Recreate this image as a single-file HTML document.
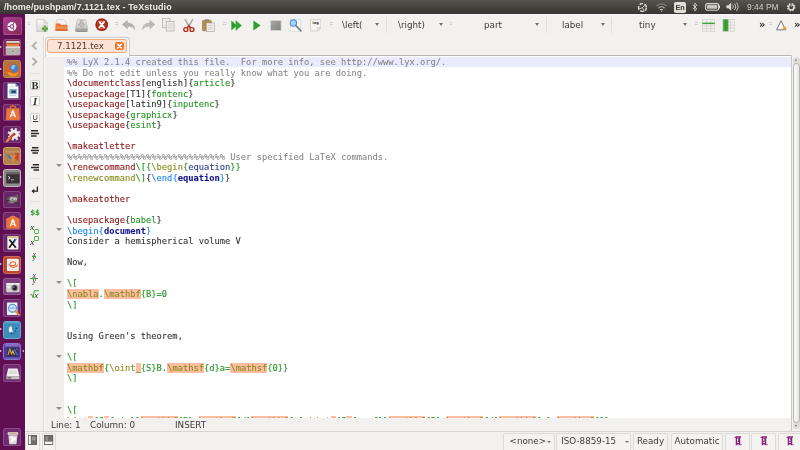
<!DOCTYPE html>
<html><head><meta charset="utf-8"><title>TeXstudio</title>
<style>
*{margin:0;padding:0;box-sizing:border-box}
html,body{width:800px;height:450px;overflow:hidden;background:#f2f1f0;font-family:"DejaVu Sans","Liberation Sans",sans-serif}
.abs{position:absolute}
#panel{left:0;top:0;width:800px;height:13.700px;background:linear-gradient(#56544d,#44433e 55%,#3b3a36 90%,#33322f)}
#title{will-change:transform;left:4px;top:0;height:14px;line-height:14px;font-size:9px;font-weight:bold;color:#efebe3;font-family:"Liberation Sans","DejaVu Sans",sans-serif;white-space:nowrap;letter-spacing:0.08px}
#launcher{left:0;top:14px;width:25px;height:436px;background:#610f53}
#toolbar{left:25px;top:13.700px;width:775px;height:42px;background:linear-gradient(#fbfbfa 0,#f4f3f2 1.200px,#f2f1f0 2px)}
#editor{left:45px;top:55.400px;width:746px;height:363px;background:#fff;border-top:1px solid #b9b7b4;overflow:hidden}
#gutter{left:0;top:0;width:19px;height:363px;background:#f0efee}
#curline{left:19px;top:.5px;width:727px;height:9.900px;background:#ebebfe}
#code{-webkit-text-stroke:.1px;will-change:transform;left:21.800px;top:0.250px;font-family:"DejaVu Sans Mono","Liberation Mono",monospace;font-size:8.76px;line-height:10.558px;white-space:pre;color:#333;letter-spacing:0px}
#code div{height:10.558px}
.cm{color:#828282;-webkit-text-stroke:.04px}.kw{color:#8a1414}.gr{color:#209320}.ol{color:#8a8a1c}.bl{color:#1482f0}.nv{color:#14148a;font-weight:bold}.nv2{color:#2a3a8a}
.hl{background:#fdbda1}
.bk{color:#3a3a3a}

.ui{will-change:transform;font-family:"DejaVu Sans","Liberation Sans",sans-serif;font-size:8.75px;color:#3c3c3c;white-space:nowrap}
#tabframe{left:44.5px;top:36.5px;width:85px;height:20px;border:1px solid #cfcdc9;border-bottom:none;border-radius:3px 3px 0 0;background:#f8f7f6}
#tab{left:46.7px;top:39.2px;width:80.5px;height:14px;border:1px solid #f1a77c;border-radius:2.5px;background:#fbe2d5}
#tabtxt{left:57.2px;top:39.2px;height:14px;line-height:14px;font-size:8.7px;color:#4a3a30}
#tabx{left:115px;top:42.2px;width:9px;height:8.2px;border-radius:2px;background:#e9772f}
#sidepanel{left:25px;top:36px;width:20px;height:396px;background:linear-gradient(90deg,#fbfaf9 0,#fbfaf9 1.400px,#f2f1f0 1.400px,#f2f1f0 18.300px,#dddbd8 18.300px,#dddbd8 19.100px,#fafaf9 19.100px)}
#statusline{left:45px;top:418.900px;width:746px;height:12px;background:#f2f1f0}
#bottombar{left:25px;top:431px;width:775px;height:19px;background:#f2f1f0;border-top:1px solid #d8d6d3}
.sbox{top:433px;height:17px;border:1px solid #dddbd8;border-bottom:none;border-radius:2px 2px 0 0;background:#f4f3f2;line-height:15px;text-align:center}
#vscroll{left:791px;top:55px;width:9px;height:376px;background:#f2f1f0;border-left:1px solid #c9c7c4}
#vtrack{left:793px;top:57px;width:7px;height:372px;background:#dedcd9;border-radius:3.5px}
#vthumb{left:793px;top:63px;width:7px;height:360px;background:linear-gradient(90deg,#fdfdfd,#e6e5e3);border:1px solid #b4b2ae;border-radius:3.5px}

.tile{position:absolute;left:3.200px;width:18px;height:17.700px;border-radius:2.6px;border:0.7px solid rgba(255,255,255,.16);background:rgba(255,255,255,.13);overflow:hidden}
.tile svg{position:absolute;left:-0.7px;top:-0.7px;width:17.8px;height:17.8px}
.pip{position:absolute;left:0;width:0;height:0;border-left:2.2px solid #e8e0e6;border-top:1.6px solid transparent;border-bottom:1.6px solid transparent}

.ic{position:absolute}
.grip{position:absolute;width:2.600px;height:6px;top:22.400px;background:repeating-linear-gradient(#d3d1cd 0,#d3d1cd .9px,transparent .9px,transparent 2.300px)}
.cb{position:absolute;top:14px;height:22px;line-height:22px}
.arr{position:absolute;top:23.200px;width:0;height:0;border-top:3.300px solid #707070;border-left:2.900px solid transparent;border-right:2.900px solid transparent;margin-left:.5px}
.vsep{position:absolute;top:17px;height:16px;width:1px;background:#e2e0dd}
#root{position:absolute;left:0;top:0;width:800px;height:450px;overflow:hidden;opacity:.999}
</style></head><body><div id="root">
<div id="panel" class="abs"></div>
<div id="title" class="abs">/home/pushpam/7.1121.tex - TeXstudio</div>
<div id="launcher" class="abs">
<div class="tile" style="top:2.90px;left:3px;width:18.600px;background:linear-gradient(135deg,#ab3e9b,#96326f 55%,#862a5a);border-color:rgba(255,255,255,.1)"><svg viewBox="0 0 18 18" style="left:-.3px"><circle cx="8" cy="9.600" r="4.600" fill="#fbf7fa"/><circle cx="8" cy="9.600" r="2.300" fill="#8e2f7a"/><path d="M8 9.600H3.200M8 9.600l2.400-4.200M8 9.600l2.400 4.200" stroke="#8e2f7a" stroke-width=".9"/><circle cx="8" cy="9.600" r="1.250" fill="#fbf7fa"/></svg></div>
<div class="tile" style="top:24.62px;background:#7e2a5e"><svg viewBox="0 0 18 18"><rect x="2.200" y="2" width="13.600" height="3" rx=".8" fill="#d6d2cf"/><rect x="2.600" y="4" width="12.800" height="4.200" fill="#e8813f"/><rect x="2.600" y="4" width="12.800" height="1.200" fill="#b9592a"/><rect x="1.800" y="7.600" width="14.400" height="8.600" rx=".9" fill="#b3b0ad"/><rect x="1.800" y="7.600" width="14.400" height="1.500" fill="#e2dfdc"/><circle cx="9" cy="12.200" r="1.700" fill="#9a9794" stroke="#d2cfcc" stroke-width=".6"/></svg></div>
<div class="tile" style="top:46.34px;background:#b3723f;border-color:#c08d58"><svg viewBox="0 0 18 18"><circle cx="9.200" cy="9.200" r="6.400" fill="#e2601c"/><path d="M3.200 11c1 3.200 4 5 7 4.400 2.600-.5 4.600-2.400 5.200-4.800-1.800 1.800-4.600 2.600-7 1.800-2.200-.7-3.800-2.200-5.200-1.400z" fill="#f09a2a"/><circle cx="10" cy="7.600" r="4.200" fill="#3f7fd0"/><path d="M8 4.600c1.400-.9 3.200-.6 4.200.6-1.100-.1-1.900.3-2.200 1 .7.400.9 1.100.6 1.900-1-.5-2-.3-2.600.4-.9-1.500-.9-3 0-3.900z" fill="#8fd0f0"/><path d="M5.600 4.200c-1 1.600-1 3.600 0 5.200 1 1.800 3.200 2.800 5.400 2.400-1.800-.5-3-1.700-3.300-3.300-1 .1-1.900-.5-2.300-1.400.4-.6.300-1.400-.2-1.900.1-.4.200-.7.400-1z" fill="#e2601c"/></svg></div>
<div class="tile" style="top:68.06px;background:#5e2a6e"><svg viewBox="0 0 18 18"><path d="M3.600 1.600h8l3 3v11.800H3.600z" fill="#fbfbfb"/><path d="M11.600 1.600l3 3h-3z" fill="#3f8fcf"/><rect x="5.400" y="7" width="7.600" height="5.400" fill="#7ab2de"/><rect x="7.400" y="8.600" width="4.600" height="2.400" fill="#2d3f50"/><rect x="5.400" y="13.400" width="7" height=".9" fill="#b9c9d9"/><rect x="5.400" y="4.400" width="4" height=".9" fill="#c9d5e0"/></svg></div>
<div class="tile" style="top:89.78px;background:#71266a"><svg viewBox="0 0 18 18"><path d="M2.600 4.400h12.800l.8 11.800H1.800z" fill="#e9743a"/><path d="M6.200 4.600c0-3.600 5.600-3.600 5.600 0" fill="none" stroke="#e9743a" stroke-width="1.300"/><path d="M6.400 13.400l2.600-6.600 2.600 6.600" fill="none" stroke="#fff" stroke-width="1.300"/><circle cx="9" cy="11.400" r=".8" fill="#fff"/><circle cx="7.200" cy="8" r=".5" fill="#fff"/><circle cx="10.800" cy="8" r=".5" fill="#fff"/></svg></div>
<div class="tile" style="top:111.50px;background:#6a2268"><svg viewBox="0 0 18 18"><circle cx="10.200" cy="8.400" r="5.200" fill="none" stroke="#dedcda" stroke-width="2.600" stroke-dasharray="2.300 1.780"/><circle cx="10.200" cy="8.400" r="4.600" fill="#efeeed"/><circle cx="10.200" cy="8.400" r="1.500" fill="#8a5a86"/><path d="M3 15.200l7-7" stroke="#c8452c" stroke-width="2.300" stroke-linecap="round"/><path d="M3 15.200l2.600-2.600" stroke="#e8853a" stroke-width="2.300" stroke-linecap="round"/></svg></div>
<div class="tile" style="top:133.22px;background:#b5814f;border-color:#c9a070"><svg viewBox="0 0 18 18"><path d="M3.600 7l2.600 3.600 1.400-1z" fill="#2f7fd0" stroke="#2f7fd0" stroke-width="1.300" stroke-linejoin="round"/><path d="M7 7.600l2 2.400 2-2.400M9 10v3.600" fill="none" stroke="#f08a28" stroke-width="1.500"/><path d="M11 6h4.400M14 6v6.600M14 9c-2.400-1-2.800 1.800-.8 2" fill="none" stroke="#d42a2a" stroke-width="1.200"/><rect x="2" y="3" width="14" height="1.600" fill="#c79a60" opacity=".8"/></svg></div>
<div class="tile" style="top:154.94px;background:#8e8b8c;border-color:#bdbbbb"><svg viewBox="0 0 18 18"><rect x="2.200" y="3.600" width="13.600" height="11" rx="1" fill="#3b3336"/><rect x="2.200" y="3.600" width="13.600" height="1.800" rx=".8" fill="#6b6667"/><path d="M4.200 7.400l2 1.400-2 1.400" fill="none" stroke="#f0f0f0" stroke-width=".9"/><rect x="7" y="10.600" width="3" height=".8" fill="#d0d0d0"/></svg></div>
<div class="tile" style="top:176.66px;background:#6a2468"><svg viewBox="0 0 18 18"><ellipse cx="8.400" cy="9" rx="5.400" ry="3.600" fill="#7d7a72"/><path d="M2 7.600l3-2 2 2.400z" fill="#5a574f"/><path d="M10 6l4-3 .6 5z" fill="#6a675f"/><ellipse cx="8" cy="8.200" rx="1.800" ry="1.500" fill="#e9e7e2"/><ellipse cx="11.400" cy="8" rx="1.500" ry="1.300" fill="#e9e7e2"/><circle cx="8.300" cy="8.300" r=".7" fill="#222"/><circle cx="11.500" cy="8.100" r=".6" fill="#222"/><path d="M11 11.600l4.600 2.400" stroke="#3a3a3a" stroke-width="1.300" stroke-linecap="round"/><ellipse cx="4" cy="9.600" rx="1.500" ry="1" fill="#2c2c2c"/></svg></div>
<div class="tile" style="top:198.38px;background:#71266a"><svg viewBox="0 0 18 18"><path d="M2.200 5.800L9 2.600l6.800 3.200v10.200H2.200z" fill="#e9743a"/><path d="M6.400 3.800h5.200" stroke="#f0b090" stroke-width=".6" stroke-dasharray=".6 .6"/><path d="M6.400 13.400l2.600-6.600 2.600 6.600" fill="none" stroke="#fff" stroke-width="1.300"/><circle cx="9" cy="11.400" r=".8" fill="#fff"/><circle cx="7.200" cy="8" r=".5" fill="#fff"/><circle cx="10.800" cy="8" r=".5" fill="#fff"/></svg></div>
<div class="tile" style="top:220.10px;background:#6a2468"><svg viewBox="0 0 18 18"><rect x="3.400" y="2.400" width="11.200" height="13.200" rx=".8" fill="#f3f2ef"/><rect x="3.400" y="2.400" width="11.200" height="1.600" fill="#d9c27a"/><path d="M5.400 5.600l6.600 8.400M11.600 5.400L5.200 14" stroke="#1a1a1a" stroke-width="1.700"/><path d="M12.600 4.800L10 9" stroke="#2f7fd0" stroke-width="1.100"/></svg></div>
<div class="tile" style="top:241.82px;background:#bb452e;border-color:#d0705a"><svg viewBox="0 0 18 18"><rect x="3" y="2.800" width="12" height="12.400" rx="1" fill="#f5f3f1"/><path d="M5.400 9.400c1-4.400 6.400-4.600 6.400-1.600 0 2-3.600 2.600-6 1.600 1.600 3 5.600 3 8.200-.4" fill="none" stroke="#e8632c" stroke-width="1.100"/><rect x="5" y="13" width="8" height=".8" fill="#d9d6d3"/></svg></div>
<div class="tile" style="top:263.54px;background:#7b3f80"><svg viewBox="0 0 18 18"><rect x="2.200" y="5" width="13.600" height="9.400" rx="1.200" fill="#d2d0cd"/><rect x="2.200" y="5" width="13.600" height="2" rx="1" fill="#ecebe9"/><circle cx="10.800" cy="10" r="3.400" fill="#8a8887"/><circle cx="10.800" cy="10" r="2.300" fill="#1d1d28"/><circle cx="10" cy="9.300" r=".7" fill="#8aa0d0"/><rect x="3.400" y="8.400" width="2.600" height="1.600" fill="#f6f5f4"/></svg></div>
<div class="tile" style="top:285.26px;background:#6f2a72"><svg viewBox="0 0 18 18"><rect x="3" y="2.600" width="10.600" height="12.600" rx=".6" fill="#eef2f6"/><circle cx="8.600" cy="8.400" r="4" fill="#cfe4f6" stroke="#5b9bd8" stroke-width="1.300"/><path d="M6.400 8.200h4.400" stroke="#5b9bd8" stroke-width="1"/><path d="M11.600 11.400l3.600 3.600" stroke="#e8923a" stroke-width="1.900" stroke-linecap="round"/></svg></div>
<div class="tile" style="top:306.98px;background:#3f8dbb;border-color:#6aa9cc"><svg viewBox="0 0 18 18"><rect x="0" y="0" width="18" height="2.400" fill="#5aa2c9"/><path d="M6.400 5.400c1.400-.4 2 1 1.600 2.400l1 3.200-3.600.4c-.8-2-1-4.600 1-6z" fill="#e9edf1"/><circle cx="12.400" cy="7.400" r=".7" fill="#1d2a6a"/><circle cx="11.600" cy="10.200" r=".7" fill="#1d2a6a"/><circle cx="7.400" cy="13" r=".7" fill="#1d2a6a"/><circle cx="10" cy="13" r=".7" fill="#1d2a6a"/></svg></div>
<div class="tile" style="top:328.70px;background:#4b3aa6;border-color:#8a78d0"><svg viewBox="0 0 18 18"><rect x="1" y="1" width="16" height="2.600" fill="#8a6ac8"/><rect x="3" y="4.400" width="12" height="9.600" fill="#3a3054"/><path d="M4 12l2-6 1.600 5 1.400-3 1.600 4" fill="none" stroke="#f0b030" stroke-width="1.100"/><path d="M10.400 6.400l3.200 6" stroke="#3f6fe0" stroke-width="1.400"/><path d="M5 6.400l2 1.600" stroke="#3fbf6f" stroke-width="1"/><path d="M12.600 5.400l1.400 2" stroke="#e04a8a" stroke-width="1"/><rect x="1" y="14.400" width="16" height="2" fill="#6a58c0"/></svg></div>
<div class="tile" style="top:350.42px;background:#6f2a72"><svg viewBox="0 0 18 18"><path d="M4.200 3.600h9.600l1.800 8H2.400z" fill="#f0efed"/><path d="M5.400 5.600h7.200l.8 3.600H4.600z" fill="#dcdad7"/><rect x="2.400" y="11.600" width="13.200" height="2.800" rx=".6" fill="#c6c4c0"/><rect x="3.400" y="12.600" width="4" height=".9" fill="#2a2a2a"/></svg></div>
<div class="tile" style="top:414.40px;background:#6f2a72"><svg viewBox="0 0 18 18"><rect x="3.600" y="3.400" width="10.800" height="2.400" rx=".8" fill="#eceae8"/><rect x="5" y="4" width="8" height=".9" fill="#e07a3c" opacity=".7"/><path d="M4.400 6.400h9.200l-1 9H5.400z" fill="#dddbd8"/><path d="M6 8l2 2-1.600 2.600 2.600 1 1-2.600 2.200.6-.6-3.200-2.400.6-.6-1.600z" fill="#fafafa"/></svg></div>
<div class="pip" style="top:32.0px"></div>
<div class="pip" style="top:53.7px"></div>
<div class="pip" style="top:140.4px"></div>
<div class="pip" style="top:162.4px"></div>
<div class="pip" style="top:249.4px"></div>
<div class="pip" style="top:314.4px"></div>
<div class="pip" style="top:336.0px"></div>
<div style="position:absolute;left:21.800px;top:335.9px;width:0;height:0;border-right:2.400px solid #e8e0e6;border-top:1.700px solid transparent;border-bottom:1.700px solid transparent"></div>
</div>
<div id="toolbar" class="abs"></div>
<div class="grip" style="left:27.5px"></div>
<div class="grip" style="left:115px"></div>
<div class="grip" style="left:223px"></div>
<div class="grip" style="left:330px"></div>
<div class="grip" style="left:695px"></div>
<div class="grip" style="left:769px"></div>
<svg class="ic" style="left:36px;top:18.8px" width="13" height="13.4" viewBox="0 0 13 13.4"><defs><linearGradient id="pg" x1="0" y1="0" x2="0" y2="1"><stop offset="0" stop-color="#fdfdfd"/><stop offset="1" stop-color="#d6d5d2"/></linearGradient></defs><path d="M.8.600h7l3.400 3.400v8.600H.8z" fill="url(#pg)" stroke="#b9b7b3" stroke-width=".6"/><path d="M7.800.600l3.400 3.400H7.800z" fill="#e4e3e0" stroke="#b9b7b3" stroke-width=".5"/><path d="M8.900 6.600v6M5.900 9.600h6" stroke="#45a535" stroke-width="2.400"/><path d="M8.900 7.600v3" stroke="#c9a55a" stroke-width="1.400"/></svg>
<svg class="ic" style="left:55px;top:19.4px" width="13" height="12.4" viewBox="0 0 13 12.4"><path d="M2 .6h6.400l2.600 2.600v5H2z" fill="#f4f3f1" stroke="#bdbbb7" stroke-width=".5"/><path d="M.6 4.600h4.400l1 1.200h6.400v6H.6z" fill="#e9733a"/><path d="M.6 7h11.800v4.800H.6z" fill="#ef8a4c"/><path d="M.6 10.400h11.800v1.400H.6z" fill="#d9622c"/></svg>
<svg class="ic" style="left:75px;top:18.6px" width="13" height="13.6" viewBox="0 0 13 13.6"><defs><linearGradient id="sv" x1="0" y1="0" x2="0" y2="1"><stop offset="0" stop-color="#e9e8e6"/><stop offset="1" stop-color="#b9b8b5"/></linearGradient></defs><path d="M2.400.6h8.200l1.800 8v3.800H.6V8.600z" fill="url(#sv)" stroke="#a9a7a3" stroke-width=".5"/><path d="M5.200 1.400h2.600v3.600h2l-3.300 3.600L3.200 5h2z" fill="#c2c0bd" stroke="#9a9894" stroke-width=".5"/><rect x=".6" y="9.600" width="11.800" height="2.800" fill="#a4a29f"/><rect x="1.600" y="12.400" width="9.800" height=".8" fill="#7a7876"/></svg>
<svg class="ic" style="left:94.8px;top:18.2px" width="13.4" height="13.4" viewBox="0 0 13.4 13.4"><circle cx="6.700" cy="6.700" r="6.400" fill="#9a2a20"/><circle cx="6.700" cy="6.700" r="5" fill="#ad3322"/><path d="M4.300 3.900l4.800 5.600M9.100 3.900L4.300 9.500" stroke="#fff" stroke-width="1.800" stroke-linecap="round"/><path d="M4.700 3.300h4M4.700 10.100h4" stroke="#e8a05a" stroke-width=".8"/></svg>
<svg class="ic" style="left:121.8px;top:20px" width="13.4" height="10.2" viewBox="0 0 13.4 10.2"><path d="M.4 4.400L5.400.4v2.600c4.600 0 7.400 2.600 7.400 6.800-1.200-2.600-3.400-3.600-7.400-3.400v2.400z" fill="#b4b3b1" stroke="#a3a2a0" stroke-width=".5"/></svg>
<svg class="ic" style="left:142.4px;top:20px" width="13.4" height="10.2" viewBox="0 0 13.4 10.2"><path d="M13 4.400L8 .4v2.600C3.400 3 .6 5.600.6 9.800 1.800 7.200 4 6.200 8 6.400v2.400z" fill="#bdbcba" stroke="#adacaa" stroke-width=".5"/></svg>
<svg class="ic" style="left:162.4px;top:18.2px" width="12.6" height="13.4" viewBox="0 0 12.6 13.4"><rect x=".4" y=".4" width="7.600" height="9.400" fill="#eeedeb" stroke="#a5a4a1" stroke-width=".6"/><rect x="4.200" y="3.600" width="7.800" height="9.400" fill="#f1f0ee" stroke="#9f9e9b" stroke-width=".6"/><path d="M5.600 6h5M5.600 8h5M5.600 10h5" stroke="#c2c1be" stroke-width=".7"/></svg>
<svg class="ic" style="left:183.4px;top:18.6px" width="11.8" height="13.6" viewBox="0 0 11.8 13.6"><path d="M2.200.6l4.600 8M9.600.6L5 8.600" stroke="#a9a8a6" stroke-width="1.500" stroke-linecap="round"/><circle cx="2.800" cy="10.600" r="2" fill="none" stroke="#c0281c" stroke-width="1.400"/><circle cx="9" cy="10.600" r="2" fill="none" stroke="#c0281c" stroke-width="1.400"/><path d="M4 9l1.900-2.400L7.800 9" fill="none" stroke="#c0281c" stroke-width="1.300"/></svg>
<svg class="ic" style="left:202px;top:18.6px" width="13" height="13" viewBox="0 0 13 13"><rect x=".4" y="1.400" width="9" height="10.400" rx=".8" fill="#b88a4a" stroke="#8f6a34" stroke-width=".5"/><rect x="2.800" y=".3" width="4.200" height="2.200" rx=".6" fill="#8a8884"/><rect x="4.400" y="4" width="8" height="8.600" fill="#f1f0ee" stroke="#9f9e9b" stroke-width=".6"/><path d="M5.800 6.400h5M5.800 8.300h5M5.800 10.200h5" stroke="#c2c1be" stroke-width=".7"/></svg>
<svg class="ic" style="left:230.8px;top:19.8px" width="11" height="11" viewBox="0 0 11 11"><path d="M.4.4l5.400 5.100L.4 10.600z" fill="#2a9a28"/><path d="M4.800.4l5.800 5.100-5.800 5.100z" fill="#35a832" stroke="#1f8a1f" stroke-width=".3"/></svg>
<svg class="ic" style="left:252.6px;top:19.8px" width="8" height="11" viewBox="0 0 8 11"><path d="M.4.4l7.200 5.100L.4 10.600z" fill="#2fa02c"/></svg>
<svg class="ic" style="left:270px;top:20px" width="11.6" height="11" viewBox="0 0 11.6 11"><defs><linearGradient id="st" x1="0" y1="0" x2="1" y2="1"><stop offset="0" stop-color="#a9a9a9"/><stop offset="1" stop-color="#7f7f7f"/></linearGradient></defs><rect x=".5" y=".5" width="10.600" height="10" fill="url(#st)" stroke="#d8d7d5" stroke-width=".8"/></svg>
<svg class="ic" style="left:289.4px;top:18.6px" width="12.8" height="13" viewBox="0 0 12.8 13"><rect x="1.600" y=".4" width="9.600" height="11.800" fill="#f7f6f4" stroke="#cfcdca" stroke-width=".5"/><circle cx="4.400" cy="4" r="3.200" fill="#a9d3f3" stroke="#4a8fd0" stroke-width="1.100"/><path d="M6.800 6.600l5.200 5.400" stroke="#6a6a78" stroke-width="1.400" stroke-linecap="round"/></svg>
<svg class="ic" style="left:309.8px;top:19.2px" width="11.6" height="12.4" viewBox="0 0 11.6 12.4"><path d="M.5.500h10.400v8l-3.400 3.400H.5z" fill="#f6f5f3" stroke="#bfbdb9" stroke-width=".6"/><path d="M10.900 8.500H7.500v3.400z" fill="#dddbd8" stroke="#bfbdb9" stroke-width=".4"/><text x="2.600" y="4.800" font-family="DejaVu Sans,sans-serif" font-size="3.600" font-weight="bold" fill="#333">log</text></svg>
<div class="cb ui" style="left:342px">\left(</div>
<div class="arr" style="left:374.9px"></div>
<div class="vsep" style="left:386px"></div>
<div class="cb ui" style="left:398px">\right)</div>
<div class="arr" style="left:438.2px"></div>
<div class="grip" style="left:449.500px"></div>
<div class="cb ui" style="left:484px">part</div>
<div class="arr" style="left:534.4px"></div>
<div class="vsep" style="left:546px"></div>
<div class="cb ui" style="left:562px">label</div>
<div class="arr" style="left:600.4px"></div>
<div class="vsep" style="left:611px"></div>
<div class="cb ui" style="left:639px">tiny</div>
<div class="arr" style="left:682.9px"></div>
<svg class="ic" style="left:702px;top:19px" width="13.2" height="12.6" viewBox="0 0 13.2 12.6"><rect x=".4" y=".4" width="12.400" height="11.800" fill="#f1f0ee" stroke="#c4c2be" stroke-width=".5"/><path d="M4.500.4v11.800M8.700.4v11.800M.4 7h12.400M.4 9.600h12.400" stroke="#c4c2be" stroke-width=".5"/><rect x=".4" y="3.600" width="12.400" height="1.500" fill="#3da536"/></svg>
<svg class="ic" style="left:722px;top:19px" width="13.2" height="12.6" viewBox="0 0 13.2 12.6"><rect x=".4" y=".4" width="12.400" height="11.800" fill="#f1f0ee" stroke="#c4c2be" stroke-width=".5"/><path d="M8.700.4v11.800M.4 3.400h12.400M.4 6.300h12.400M.4 9.200h12.400" stroke="#c4c2be" stroke-width=".5"/><rect x="1.200" y=".4" width="5.200" height="11.800" fill="#3da536"/><path d="M3.800.4v11.800" stroke="#2a8a26" stroke-width=".6"/></svg>
<div class="cb ui" style="left:758.500px;font-weight:bold;font-size:10px;color:#2a2a2a;letter-spacing:-1px;margin-top:-.5px">&raquo;</div>
<div class="cb ui" style="left:793.500px;font-weight:bold;font-size:10px;color:#2a2a2a;letter-spacing:-1px;margin-top:-.5px">&raquo;</div>
<svg class="ic" style="left:775.6px;top:19.6px" width="11.6" height="11.4" viewBox="0 0 11.6 11.4"><path d="M5 .8l4.600 9H.6z" fill="#fbfbfb" stroke="#555" stroke-width=".8" stroke-linejoin="round"/><path d="M7.600 6.600c1.600-.4 3 .8 3 2.600H6.800c0-1 .2-2 .8-2.600z" fill="#f0a23c"/></svg>
<div id="editor" class="abs">
<div id="gutter" class="abs"></div>
<div id="curline" class="abs"></div>
<div id="code" class="abs"><div class="cm">%% LyX 2.1.4 created this file.  For more info, see http://www.lyx.org/.</div><div class="cm">%% Do not edit unless you really know what you are doing.</div><div><span class="kw">\documentclass</span>[english]{<span class="gr">article</span>}</div><div><span class="kw">\usepackage</span>[T1]{<span class="gr">fontenc</span>}</div><div><span class="kw">\usepackage</span>[latin9]{<span class="gr">inputenc</span>}</div><div><span class="kw">\usepackage</span>{<span class="gr">graphicx</span>}</div><div><span class="kw">\usepackage</span>{<span class="gr">esint</span>}</div><div> </div><div><span class="kw">\makeatletter</span></div><div class="cm">%%%%%%%%%%%%%%%%%%%%%%%%%%%%%% User specified LaTeX commands.</div><div><span class="kw">\renewcommand</span><span class="gr">\[{</span><span class="ol">\begin</span><span class="gr">{</span><span class="nv2">equation</span><span class="gr">}}</span></div><div><span class="ol">\renewcommand</span><span class="gr">\]</span>{<span class="bl">\end{</span><span class="nv">equation</span><span class="bl">}</span>}</div><div> </div><div><span class="kw">\makeatother</span></div><div> </div><div><span class="kw">\usepackage</span>{<span class="gr">babel</span>}</div><div><span class="bl">\begin{</span><span class="nv">document</span><span class="bl">}</span></div><div>Consider a hemispherical volume V</div><div> </div><div>Now,</div><div> </div><div><span class="gr">\[</span></div><div><span class="ol hl">\nabla</span><span class="gr">.</span><span class="ol hl">\mathbf</span><span class="gr">{B}=0</span></div><div><span class="gr">\]</span></div><div> </div><div> </div><div>Using Green's theorem,</div><div> </div><div><span class="gr">\[</span></div><div><span class="ol hl">\mathbf</span><span class="gr">{</span><span class="ol">\oint</span><span class="gr hl">_</span><span class="gr">{S}B.</span><span class="ol hl">\mathsf</span><span class="gr">{d}a=</span><span class="ol hl">\mathsf</span><span class="gr">{0}}</span></div><div><span class="gr">\]</span></div><div> </div><div> </div><div><span class="gr">\[</span></div><div><span class="ol">\int</span><span class="gr hl">_</span><span class="gr">{S</span><span class="gr hl">_</span><span class="gr">{rim}}</span><span class="ol hl">\mathbf</span><span class="gr">{B}.</span><span class="ol hl">\mathsf</span><span class="gr">{d}</span><span class="ol hl">\mathbf</span><span class="gr">{a}+</span><span class="ol">\int</span><span class="gr hl">_</span><span class="gr">{S</span><span class="gr hl">_</span><span class="gr">{surf}}</span><span class="ol hl">\mathbf</span><span class="gr">{B}.</span><span class="ol hl">\mathsf</span><span class="gr">{d}</span><span class="ol hl">\mathbf</span><span class="gr">{a}=</span><span class="ol hl">\mathsf</span><span class="gr">{0}</span></div></div>
</div>

<div id="tabframe" class="abs"></div>
<div id="tab" class="abs"></div>
<div id="tabtxt" class="abs ui">7.1121.tex</div>
<div id="tabx" class="abs"><svg class="abs" style="left:0;top:0" width="9" height="8.2" viewBox="0 0 9 8.2"><path d="M2.7 2.3L6.3 5.9M6.3 2.3L2.7 5.9" stroke="#fff" stroke-width="1.5" stroke-linecap="round"/></svg></div>
<div id="sidepanel" class="abs"></div>
<div id="statusline" class="abs"></div>
<div class="abs ui" style="left:50.500px;top:420px;height:11px;line-height:11px;font-size:8.8px">Line: 1</div>
<div class="abs ui" style="left:90px;top:420px;height:11px;line-height:11px;font-size:8.8px">Column: 0</div>
<div class="abs ui" style="left:174.5px;top:420px;height:11px;line-height:11px;font-size:8.8px">INSERT</div>
<div id="bottombar" class="abs"></div>
<div class="abs sbox ui" style="left:502.5px;width:51.5px;text-align:left;padding-left:5.600px">&lt;none&gt;</div>
<div class="abs sbox ui" style="left:556px;width:74.5px;text-align:left;padding-left:4.200px">ISO-8859-15</div>
<div class="abs sbox ui" style="left:633px;width:35px">Ready</div>
<div class="abs sbox ui" style="left:671px;width:52px">Automatic</div>
<div class="abs sbox ui" style="left:724.5px;width:25px"></div>
<div class="abs sbox ui" style="left:751px;width:25px"></div>
<div class="abs sbox ui" style="left:777.5px;width:25px"></div>
<div id="vscroll" class="abs"></div>
<div id="vtrack" class="abs"></div>
<div id="vthumb" class="abs"></div>
<svg class="ic" style="left:636.6px;top:1.6px" width="11" height="11" viewBox="0 0 11 11"><circle cx="5.500" cy="5.500" r="3.900" fill="none" stroke="#dcd8d0" stroke-width="1.500" stroke-dasharray="3.400 1.600"/><path d="M5.500 5.500l3.600-3.200M5.500 5.500L1.400 7.600M5.500 5.500l1.600 4.200" stroke="#dcd8d0" stroke-width=".9"/></svg>
<svg class="ic" style="left:655.5px;top:2.6px" width="11" height="9" viewBox="0 0 11 9"><path d="M.6 3.200c3-3 6.800-3 9.800 0" fill="none" stroke="#8e8a83" stroke-width="1.100"/><path d="M2.400 5.100c2-2 4.200-2 6.200 0" fill="none" stroke="#aaa69e" stroke-width="1.100"/><path d="M4 6.900c1-.9 2-.9 3 0" fill="none" stroke="#c8c4bc" stroke-width="1.100"/><circle cx="5.500" cy="8.100" r=".7" fill="#d4d0c8"/></svg>
<div class="abs" style="left:674.200px;top:1.500px;width:11.800px;height:11px;border-radius:1.800px;background:#e2ded6;color:#3c3b37;font-family:'Liberation Sans',sans-serif;font-size:7.400px;line-height:11px;text-align:center;font-weight:bold;letter-spacing:-.2px">En</div>
<svg class="ic" style="left:691.8px;top:2px" width="6" height="10" viewBox="0 0 6 10"><path d="M.8 2.900l4 4-2 1.900V1.200l2 1.900-4 4" fill="none" stroke="#dcd8d0" stroke-width=".9" stroke-linejoin="round"/></svg>
<svg class="ic" style="left:704.8px;top:3.2px" width="15.6" height="8" viewBox="0 0 15.6 8"><rect x=".6" y=".6" width="13" height="6.600" rx="1.600" fill="none" stroke="#dcd8d0" stroke-width="1.100"/><rect x="2" y="2" width="10.200" height="3.800" rx=".7" fill="#c9c5bd"/><rect x="14" y="2.400" width="1.300" height="3" fill="#dcd8d0"/></svg>
<svg class="ic" style="left:726px;top:2.4px" width="13" height="9.6" viewBox="0 0 13 9.6"><path d="M.4 3.200h2l2.800-2.600v8.200L2.400 6.200h-2z" fill="#dcd8d0"/><path d="M6.600 2.800c1 1.200 1 2.800 0 4M8.400 1.600c1.700 2 1.700 4.400 0 6.400M10.300.6c2.300 2.700 2.300 5.700 0 8.400" fill="none" stroke="#dcd8d0" stroke-width=".9"/></svg>
<div class="abs" style="left:747px;top:0;height:14px;line-height:14px;color:#d2cec6;font-family:'Liberation Sans',sans-serif;font-size:8.500px;white-space:nowrap">9:44 PM</div>
<svg class="ic" style="left:785.6px;top:2px" width="10.4" height="10.4" viewBox="0 0 10.4 10.4"><circle cx="5.200" cy="5.200" r="3.300" fill="none" stroke="#dcd8d0" stroke-width="2" stroke-dasharray="1.500 1.090"/><circle cx="5.200" cy="5.200" r="2.700" fill="none" stroke="#dcd8d0" stroke-width="1.300"/><path d="M5.200 1.600v3.200" stroke="#3c3b37" stroke-width="1.600"/><path d="M5.200 1.800v3" stroke="#dcd8d0" stroke-width=".8"/></svg>
<svg class="ic" style="left:30.6px;top:41px" width="7" height="9.4" viewBox="0 0 7 9.4"><path d="M5.600 1L1.600 4.700l4 3.700" fill="none" stroke="#b3b1af" stroke-width="1.900" stroke-linejoin="miter"/></svg>
<svg class="ic" style="left:31.4px;top:56.8px" width="7" height="9.4" viewBox="0 0 7 9.4"><path d="M1.400 1l4 3.700-4 3.700" fill="none" stroke="#b3b1af" stroke-width="1.900" stroke-linejoin="miter"/></svg>
<div class="abs" style="left:30px;top:73.400px;width:9.500px;height:1px;background:#e6e4e1"></div>
<div class="abs" style="left:30.400px;top:80px;width:9.400px;height:9.600px;border:.6px solid #cfcdc9;border-radius:1.200px;background:#fbfbfa;text-align:center;line-height:8.600px;color:#2e2e2e;font-family:'Liberation Serif',serif;font-weight:bold;font-size:10.600px;line-height:9px">B</div>
<div class="abs" style="left:30.400px;top:96.4px;width:9.400px;height:9.600px;border:.6px solid #cfcdc9;border-radius:1.200px;background:#fbfbfa;text-align:center;line-height:8.600px;color:#2e2e2e;font-family:'Liberation Serif',serif;font-style:italic;font-weight:bold;font-size:10.600px;line-height:9px">I</div>
<div class="abs" style="left:30.400px;top:112.6px;width:9.400px;height:9.600px;border:.6px solid #cfcdc9;border-radius:1.200px;background:#fbfbfa;text-align:center;line-height:8.600px;color:#2e2e2e;font-family:'Liberation Sans',sans-serif;font-size:7.400px;line-height:7.400px;color:#333">U<span style="position:absolute;left:1.600px;top:7.200px;width:5.400px;height:.8px;background:#333"></span></div>
<svg class="ic" style="left:31px;top:130.4px" width="8.4" height="7" viewBox="0 0 8.4 7"><path d="M0 .8h7M0 3.400h8.200M0 6h5.600" stroke="#2b2b2b" stroke-width="1.500"/></svg>
<svg class="ic" style="left:31px;top:147px" width="8.4" height="7" viewBox="0 0 8.4 7"><path d="M1 .8h6.400M0 3.400h8.400M1.400 6h5.600" stroke="#2b2b2b" stroke-width="1.500"/></svg>
<svg class="ic" style="left:31px;top:163.8px" width="8.4" height="7" viewBox="0 0 8.4 7"><path d="M1.800.8h6.600M0 3.400h8.400M2.600 6h5.800" stroke="#2b2b2b" stroke-width="1.500"/></svg>
<div class="abs" style="left:30px;top:178.200px;width:9.500px;height:1px;background:#e6e4e1"></div>
<svg class="ic" style="left:31px;top:186px" width="7.6" height="7.6" viewBox="0 0 7.6 7.6"><path d="M6.400.4v4.800H1.600" fill="none" stroke="#222" stroke-width="1.300"/><path d="M3.200 2.800L.6 5.200l2.600 2.400z" fill="#222"/></svg>
<div class="abs" style="left:30px;top:200.600px;width:9.500px;height:1px;background:#e6e4e1"></div>
<div class="abs" style="left:29.600px;top:207.700px;width:11px;height:10px;line-height:10px;text-align:center;color:#2f9e2c;font-family:'DejaVu Sans',sans-serif;font-weight:bold;font-size:7.200px;letter-spacing:-.1px">$$</div>
<div class="abs" style="left:30.200px;top:221.600px;height:10px;line-height:10px;color:#1e1e1e;font-family:'Liberation Serif',serif;font-style:italic;font-size:9px">x</div>
<div class="abs" style="left:34.200px;top:229.400px;width:4.600px;height:4.600px;border:1px solid #55b050;border-radius:1px;background:#f2faf1"></div>
<div class="abs" style="left:30.200px;top:236.800px;height:10px;line-height:10px;color:#1e1e1e;font-family:'Liberation Serif',serif;font-style:italic;font-size:9px">x</div>
<div class="abs" style="left:34px;top:236.200px;width:5px;height:4.800px;border:1px solid #55b050;border-radius:1px;background:#f2faf1"></div>
<div class="abs" style="left:32.800px;top:250.200px;height:7px;line-height:7px;color:#1e1e1e;font-family:'Liberation Serif',serif;font-style:italic;font-size:6.800px">x</div>
<div class="abs" style="left:32.200px;top:255.800px;width:4px;height:1px;background:#3aa536"></div>
<div class="abs" style="left:32.800px;top:254.200px;height:7px;line-height:7px;color:#1e1e1e;font-family:'Liberation Serif',serif;font-style:italic;font-size:6.800px">y</div>
<div class="abs" style="left:32.600px;top:271.600px;height:8px;line-height:8px;color:#1e1e1e;font-family:'Liberation Serif',serif;font-style:italic;font-size:7.600px">x</div>
<div class="abs" style="left:30.400px;top:277.600px;width:8px;height:1.100px;background:#3aa536"></div>
<div class="abs" style="left:32.600px;top:276.600px;height:8px;line-height:8px;color:#1e1e1e;font-family:'Liberation Serif',serif;font-style:italic;font-size:7.600px">y</div>
<svg class="ic" style="left:29.800px;top:290.200px" width="9.400" height="9" viewBox="0 0 9.400 9"><path d="M.4 4.800l1.300-.6 1.300 3.600L4.400.7h4.600" fill="none" stroke="#3aa536" stroke-width="1"/><text x="4.400" y="7.600" font-family="Liberation Serif,serif" font-style="italic" font-size="8" fill="#1e1e1e">x</text></svg>
<div class="abs" style="left:56px;top:164.98px;width:0;height:0;border-top:3.500px solid #8e8e8e;border-left:3.300px solid transparent;border-right:3.300px solid transparent;margin:-.5px 0 0 -.4px"></div>
<div class="abs" style="left:56px;top:228.33px;width:0;height:0;border-top:3.500px solid #8e8e8e;border-left:3.300px solid transparent;border-right:3.300px solid transparent;margin:-.5px 0 0 -.4px"></div>
<div class="abs" style="left:56px;top:281.12px;width:0;height:0;border-top:3.500px solid #8e8e8e;border-left:3.300px solid transparent;border-right:3.300px solid transparent;margin:-.5px 0 0 -.4px"></div>
<div class="abs" style="left:56px;top:355.02px;width:0;height:0;border-top:3.500px solid #8e8e8e;border-left:3.300px solid transparent;border-right:3.300px solid transparent;margin:-.5px 0 0 -.4px"></div>
<div class="abs" style="left:56px;top:407.81px;width:0;height:0;border-top:3.500px solid #8e8e8e;border-left:3.300px solid transparent;border-right:3.300px solid transparent;margin:-.5px 0 0 -.4px"></div>
<div class="abs" style="left:25.4px;top:432.600px;width:14.600px;height:17.400px;border:1px solid #dcdad7;border-bottom:none;border-radius:1.500px 1.500px 0 0;background:#f4f3f2"></div>
<div class="abs" style="left:41.6px;top:432.600px;width:14.600px;height:17.400px;border:1px solid #dcdad7;border-bottom:none;border-radius:1.500px 1.500px 0 0;background:#f4f3f2"></div>
<svg class="ic" style="left:28.2px;top:435.4px" width="9.2" height="9.8" viewBox="0 0 9.2 9.8"><rect x=".4" y=".4" width="8.400" height="9" fill="#6f6d6b" stroke="#4a4846" stroke-width=".7"/><rect x=".8" y=".8" width="2" height="8.200" fill="#f4f3f1"/><rect x="4" y="2" width="3.600" height="3.400" fill="#9a9896"/></svg>
<svg class="ic" style="left:44.4px;top:435.4px" width="9.2" height="9.8" viewBox="0 0 9.2 9.8"><rect x=".4" y=".4" width="8.400" height="9" fill="#6f6d6b" stroke="#4a4846" stroke-width=".7"/><rect x=".8" y="6.600" width="7.600" height="2.400" fill="#f4f3f1"/><rect x="1.600" y="1.600" width="2" height="4" fill="#9a9896"/></svg>
<svg class="ic" style="left:733.5px;top:436.4px" width="8" height="9.4" viewBox="0 0 8 9.4"><path d="M1.600 1h5.400M2.400 1v7.400l1.600-1.200 1.600 1.200V1" fill="none" stroke="#8e1f7e" stroke-width="1.300"/><path d="M.6 1.400h1.400M6.600 8.600h1" stroke="#8e1f7e" stroke-width="1"/><text x="3.100" y="6.200" font-family="Liberation Sans,sans-serif" font-size="4.600" font-weight="bold" fill="#5a145a">1</text></svg>
<svg class="ic" style="left:759.5px;top:436.4px" width="8" height="9.4" viewBox="0 0 8 9.4"><path d="M1.600 1h5.400M2.400 1v7.400l1.600-1.200 1.600 1.200V1" fill="none" stroke="#8e1f7e" stroke-width="1.300"/><path d="M.6 1.400h1.400M6.600 8.600h1" stroke="#8e1f7e" stroke-width="1"/><text x="3.100" y="6.200" font-family="Liberation Sans,sans-serif" font-size="4.600" font-weight="bold" fill="#5a145a">2</text></svg>
<svg class="ic" style="left:786px;top:436.4px" width="8" height="9.4" viewBox="0 0 8 9.4"><path d="M1.600 1h5.400M2.400 1v7.400l1.600-1.200 1.600 1.200V1" fill="none" stroke="#8e1f7e" stroke-width="1.300"/><path d="M.6 1.400h1.400M6.600 8.600h1" stroke="#8e1f7e" stroke-width="1"/><text x="3.100" y="6.200" font-family="Liberation Sans,sans-serif" font-size="4.600" font-weight="bold" fill="#5a145a">3</text></svg>
<div class="arr" style="left:546.200px;top:441.200px;border-top-width:2.600px;border-left-width:2.200px;border-right-width:2.200px"></div>
<div class="arr" style="left:624px;top:441.200px;border-top-width:2.600px;border-left-width:2.200px;border-right-width:2.200px"></div>
<div class="abs" style="left:794.800px;top:59.400px;width:0;height:0;border-bottom:2.200px solid #77756f;border-left:1.800px solid transparent;border-right:1.800px solid transparent"></div>
<div class="abs" style="left:794.800px;top:425.400px;width:0;height:0;border-top:2.200px solid #77756f;border-left:1.800px solid transparent;border-right:1.800px solid transparent"></div>
</div></body></html>
